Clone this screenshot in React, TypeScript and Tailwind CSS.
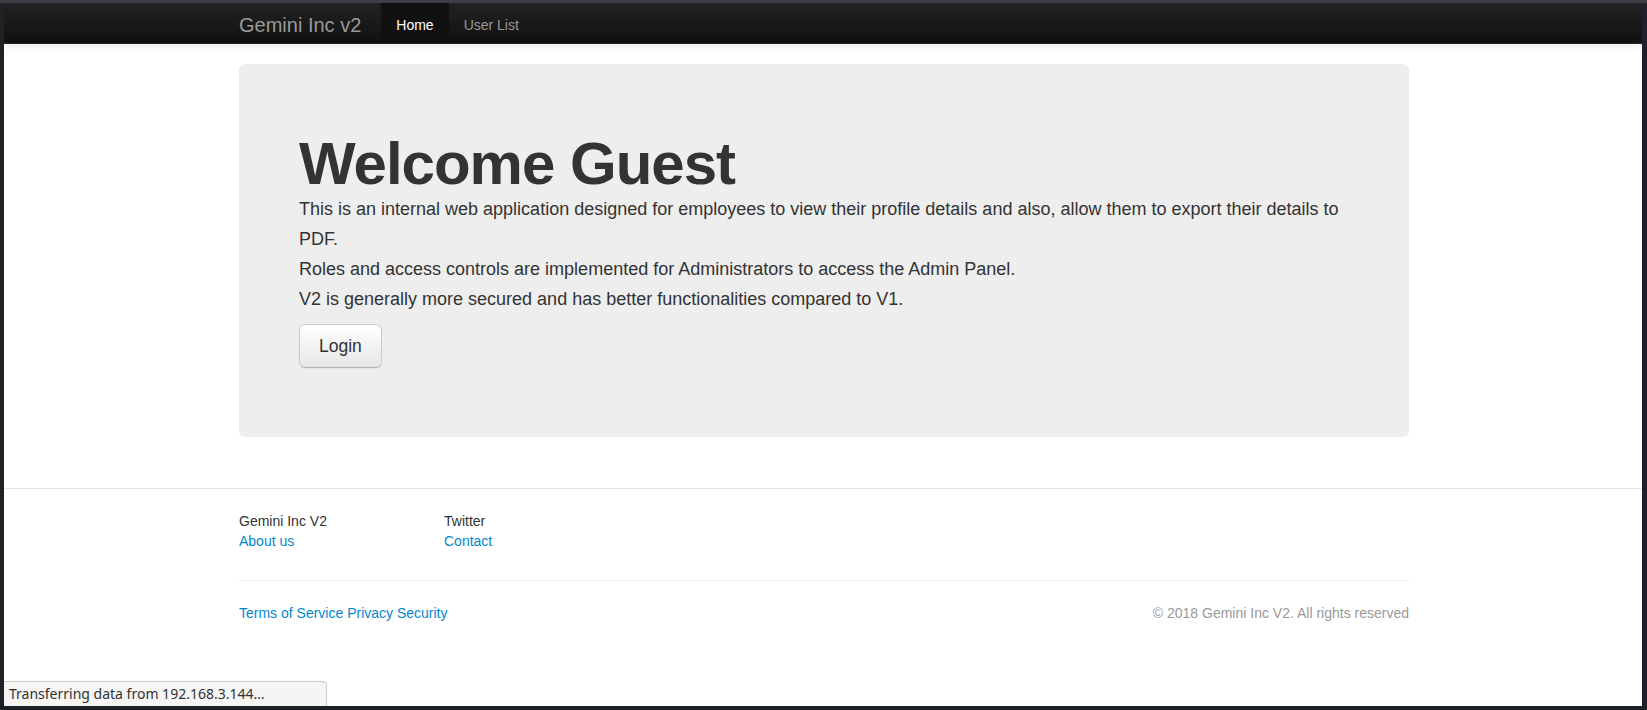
import React from "react";

const App = () => {
  return (
    <div className="w-[1647px] h-[710px] overflow-hidden bg-[#1f2129] border-t-[3px] border-[#3c3f46] pl-[4px] pr-[5px] pb-[4px] font-['Liberation_Sans',Arial,sans-serif]">
      <div className="relative h-full bg-white overflow-hidden text-[14px] leading-[20px] text-[#333]">
        {/* Navbar */}
        <div className="h-[41px] bg-gradient-to-b from-[#222] to-[#111] border-b border-[#252525] shadow-[0_1px_10px_rgba(0,0,0,0.1)]">
          <div className="pl-[2px]">
            <div className="w-[1170px] mx-auto flex">
              <a className="pt-[12px] pb-[8px] pr-[20px] text-[20px] leading-[20px] text-[#999]">Gemini Inc v2</a>
              <ul className="flex">
                <li>
                  <a className="block px-[15px] pt-[12px] pb-[8px] bg-[#111] text-white">Home</a>
                </li>
                <li>
                  <a className="block px-[15px] pt-[12px] pb-[8px] text-[#999]">User List</a>
                </li>
              </ul>
            </div>
          </div>
        </div>

        <div className="pl-[2px]">
          {/* Hero */}
          <div className="w-[1170px] mx-auto mt-[20px] mb-[51px] bg-[#eee] rounded-[6px] pt-[60px] pb-[69px] px-[60px]">
            <h1 className="mt-[10px] text-[60px] leading-[60px] font-bold tracking-[-1px] text-[#333]">
              Welcome Guest
            </h1>
            <p className="text-[18px] leading-[30px] text-[#333]">
              This is an internal web application designed for employees to view their profile details and also, allow them to export their details to PDF.
              <br />
              Roles and access controls are implemented for Administrators to access the Admin Panel.
              <br />
              V2 is generally more secured and has better functionalities compared to V1.
            </p>
            <button
              type="button"
              className="mt-[10px] px-[19px] py-[11px] text-[17.5px] leading-[20px] text-[#333] rounded-[6px] border border-[#ccc] border-b-[#b3b3b3] bg-gradient-to-b from-white to-[#e6e6e6] shadow-[inset_0_1px_0_rgba(255,255,255,0.2),0_1px_2px_rgba(0,0,0,0.05)]"
            >
              Login
            </button>
          </div>
        </div>

        {/* Footer */}
        <div className="border-t border-[#e5e5e5] pt-[22px] pl-[2px]">
          <div className="w-[1170px] mx-auto">
            <div className="flex">
              <div className="w-[205px]">
                <div>Gemini Inc V2</div>
                <a className="text-[#0088cc]">About us</a>
              </div>
              <div>
                <div>Twitter</div>
                <a className="text-[#0088cc]">Contact</a>
              </div>
            </div>
            <hr className="mt-[29px] border-t border-[#eee]" />
            <div className="mt-[22px] flex justify-between">
              <div className="text-[#0088cc]">
                <a>Terms of Service</a> <a>Privacy</a> <a>Security</a>
              </div>
              <div className="text-[#999]">© 2018 Gemini Inc V2. All rights reserved</div>
            </div>
          </div>
        </div>

        {/* Status bar */}
        <div className="absolute left-0 bottom-0 w-[323px] h-[25px] flex items-center pl-[5px] bg-[#f6f5f4] border-t border-r border-[#cdcbc8] rounded-tr-[4px] font-['Noto_Sans',sans-serif] text-[14px] text-[#2e3436]">
          Transferring data from 192.168.3.144…
        </div>
      </div>
    </div>
  );
};

export default App;
